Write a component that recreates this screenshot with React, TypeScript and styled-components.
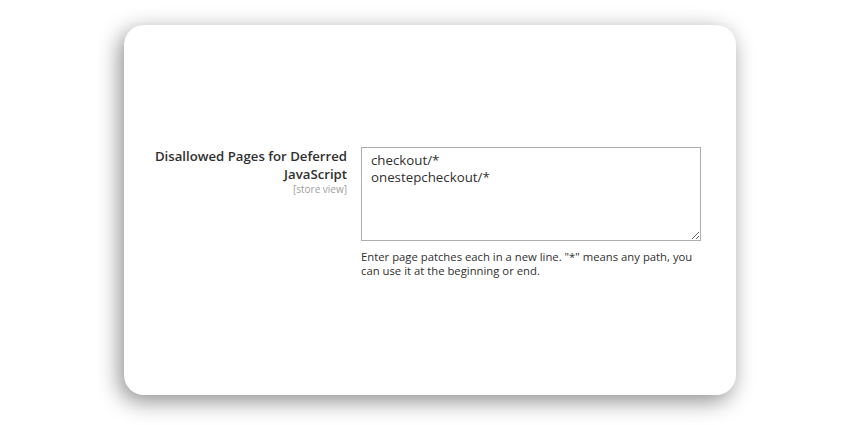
import styled, { createGlobalStyle } from 'styled-components';

const GlobalStyle = createGlobalStyle`
  html, body {
    margin: 0;
    padding: 0;
    background: #ffffff;
  }
  body {
    font-family: "Open Sans", "Noto Sans", sans-serif;
    color: #303030;
  }
`;

const Page = styled.main`
  width: 853px;
  height: 425px;
  box-sizing: border-box;
  padding: 25px 117px 30px 124px;
`;

const Card = styled.section`
  height: 370px;
  background: #ffffff;
  border-radius: 20px;
  box-shadow: -4px 6px 22px rgba(0, 0, 0, 0.45);
  box-sizing: border-box;
  padding-top: 122px;
`;

const FieldRow = styled.div`
  display: grid;
  grid-template-columns: 223px 340px;
  column-gap: 14px;
  align-items: start;
`;

const Label = styled.label`
  text-align: right;
  padding-top: 1px;
  font-size: 13.2px;
  font-weight: 600;
  line-height: 17.5px;
  color: #303030;
`;

const Scope = styled.span`
  display: block;
  font-size: 10px;
  font-weight: 400;
  line-height: 13px;
  color: #a0a0a0;
`;

const Control = styled.div`
  display: flex;
  flex-direction: column;
`;

const TextArea = styled.textarea`
  width: 340px;
  height: 94px;
  box-sizing: border-box;
  margin: 0;
  padding: 4px 9px;
  border: 1px solid #adadad;
  border-radius: 0;
  font-family: "Open Sans", "Noto Sans", sans-serif;
  font-size: 13.3px;
  line-height: 17px;
  color: #303030;
  resize: vertical;
  outline: none;
`;

const Note = styled.p`
  margin: 9px 0 0;
  font-size: 11.3px;
  line-height: 14px;
  color: #303030;
`;

const App = () => (
  <>
    <GlobalStyle />
    <Page>
      <Card>
        <FieldRow>
          <Label htmlFor="disallowed-pages">
            Disallowed Pages for Deferred
            <br />
            JavaScript
            <Scope>[store view]</Scope>
          </Label>
          <Control>
            <TextArea
              id="disallowed-pages"
              defaultValue={'checkout/*\nonestepcheckout/*'}
            />
            <Note>
              Enter page patches each in a new line. "*" means any path, you can use it at the
              beginning or end.
            </Note>
          </Control>
        </FieldRow>
      </Card>
    </Page>
  </>
);

export default App;
